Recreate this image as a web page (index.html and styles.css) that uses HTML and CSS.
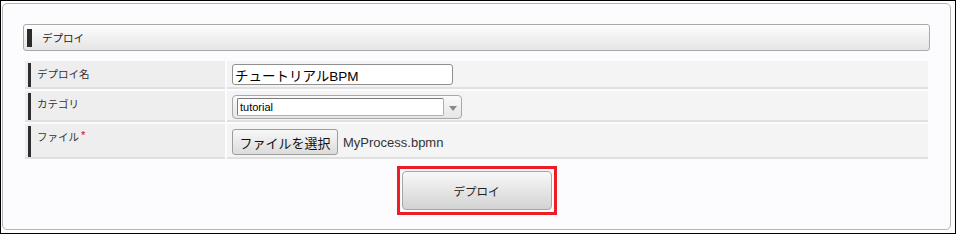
FILE: index.html
```html
<!DOCTYPE html>
<html lang="ja">
<head>
<meta charset="utf-8">
<title>デプロイ</title>
<link rel="stylesheet" href="styles.css">
</head>
<body>
<div class="frame">
  <div class="panel">
    <div class="section-head"><span class="head-bar"></span><span class="head-title">デプロイ</span></div>
    <table class="form">
      <tr>
        <th class="label">デプロイ名</th>
        <td class="value"><input class="text" type="text" value="チュートリアルBPM"></td>
      </tr>
      <tr>
        <th class="label">カテゴリ</th>
        <td class="value value-select">
          <div class="select">
            <div class="select-field">tutorial</div>
            <div class="select-arrow"><span class="tri"></span></div>
          </div>
        </td>
      </tr>
      <tr>
        <th class="label">ファイル<span class="req">*</span></th>
        <td class="value value-file">
          <div class="file-row">
            <button class="filebtn" type="button">ファイルを選択</button>
            <span class="filename">MyProcess.bpmn</span>
          </div>
        </td>
      </tr>
    </table>
    <div class="actions">
      <div class="highlight"><button class="deploy" type="button">デプロイ</button></div>
    </div>
  </div>
</div>
</body>
</html>
```

FILE: styles.css
```css
html, body {
  margin: 0;
  padding: 0;
  background: #ffffff;
}
body {
  font-family: "Liberation Sans", "Noto Sans CJK JP", sans-serif;
  color: #333;
}
.frame {
  width: 956px;
  height: 234px;
  box-sizing: border-box;
  border: 1px solid #000;
  padding: 2px 4px 0 1px;
  background: #ffffff;
}
.panel {
  box-sizing: border-box;
  height: 227px;
  border: 1px solid #b4b4b4;
  border-radius: 5px;
  background: #fcfcfe;
  padding: 20px 20px 15px 20px;
}
.section-head {
  box-sizing: border-box;
  height: 27px;
  border: 1px solid #a9a9a9;
  border-radius: 3px;
  background: linear-gradient(#fdfdfd, #e5e5e5);
  display: flex;
  align-items: center;
  padding-left: 3px;
}
.head-bar {
  width: 5px;
  height: 18px;
  background: #2b2b2b;
}
.head-title {
  margin-left: 10px;
  font-family: "Noto Sans CJK JP", sans-serif;
  font-size: 10.5px;
  line-height: 13px;
  color: #222;
}
.form {
  width: 100%;
  border-collapse: separate;
  border-spacing: 2px;
  margin-top: 8px;
}
.form th, .form td {
  border-bottom: 2px solid #e0e0e0;
  text-align: left;
  font-weight: normal;
}
.label {
  width: 188px;
  vertical-align: top;
  padding: 6px 0 0 12px;
  font-family: "Noto Sans CJK JP", sans-serif;
  font-size: 10.5px;
  line-height: 14px;
  color: #333;
  background: linear-gradient(#2e2e2e, #2e2e2e) no-repeat 3px 2px / 3px calc(100% - 2px), #eeeeee;
}
.req {
  color: #cc0000;
  font-family: "Liberation Sans", sans-serif;
  font-size: 11px;
  margin-left: 2px;
  position: relative;
  top: -2px;
}
.value {
  background: #f4f4f4;
  padding: 3px 5px 2px 5px;
  vertical-align: top;
}
.value-select {
  padding-top: 4px;
  padding-bottom: 1px;
}
.value-file {
  padding-top: 5px;
  padding-bottom: 2px;
}
.text {
  box-sizing: border-box;
  display: block;
  width: 221px;
  height: 21px;
  margin: 0;
  border: 1px solid #8f8f8f;
  border-radius: 3px;
  padding: 0 2px;
  background: #fff;
  font-family: "Liberation Sans", "Noto Sans CJK JP", sans-serif;
  font-size: 13.5px;
  color: #000;
}
.select {
  box-sizing: border-box;
  width: 230px;
  height: 24px;
  border: 1px solid #a8a8a8;
  border-radius: 4px;
  background: linear-gradient(#fafafa, #e6e6e6);
  display: flex;
  align-items: center;
  padding-left: 4px;
}
.select-field {
  box-sizing: border-box;
  width: 207px;
  height: 18px;
  border: 1px solid #7a7a7a;
  border-right-color: #b0b0b0;
  border-bottom-color: #b0b0b0;
  border-radius: 2px;
  background: #fff;
  font-family: "Liberation Sans", sans-serif;
  font-size: 11px;
  line-height: 16px;
  padding-left: 2px;
  color: #000;
}
.select-arrow {
  flex: 1;
  display: flex;
  justify-content: center;
  align-items: center;
}
.tri {
  width: 0;
  height: 0;
  border-left: 4px solid transparent;
  border-right: 4px solid transparent;
  border-top: 5px solid #8a8a8a;
  margin-top: 2px;
}
.file-row {
  display: flex;
  align-items: center;
}
.filebtn {
  box-sizing: border-box;
  width: 106px;
  height: 26px;
  margin: 0;
  padding: 0;
  border: 1px solid #9d9d9d;
  border-radius: 3px;
  background: linear-gradient(#f8f8f8, #dcdcdc);
  font-family: "Noto Sans CJK JP", sans-serif;
  font-size: 13px;
  color: #111;
}
.filename {
  margin-left: 5px;
  font-family: "Liberation Sans", sans-serif;
  font-size: 13px;
  color: #333;
}
.actions {
  display: flex;
  justify-content: center;
  margin-top: 5px;
}
.highlight {
  border: 3px solid #ee1c25;
  padding: 2px;
  background: #fcfcfe;
}
.deploy {
  display: block;
  box-sizing: border-box;
  width: 150px;
  height: 39px;
  margin: 0;
  border: 1px solid #a6a6a6;
  border-radius: 4px;
  background: linear-gradient(#f8f8f8, #d3d3d3);
  font-family: "Noto Sans CJK JP", sans-serif;
  font-size: 11.5px;
  color: #222;
}
```
